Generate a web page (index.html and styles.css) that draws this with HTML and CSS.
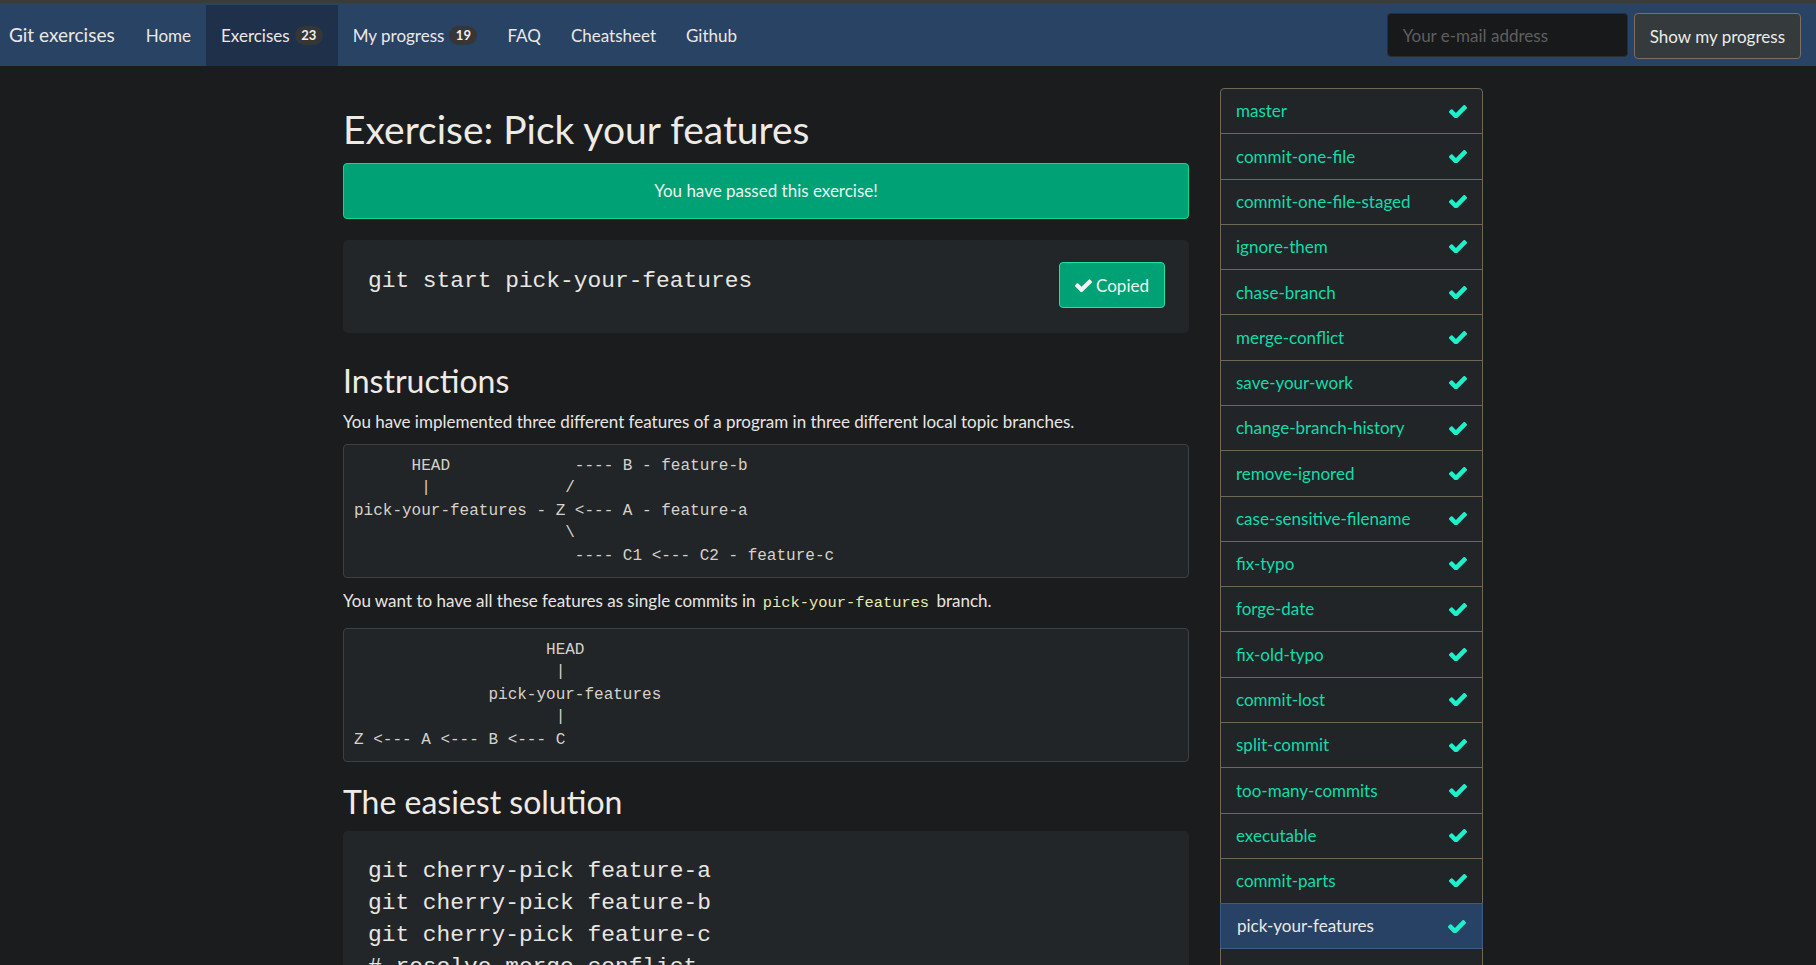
FILE: index.html
```html
<!DOCTYPE html>
<html lang="en">
<head>
<meta charset="utf-8">
<title>Git exercises</title>
<link rel="stylesheet" href="styles.css">
</head>
<body>
<div class="topstrip"></div>
<nav class="navbar">
  <a class="brand" href="#">Git exercises</a>
  <ul class="nav">
    <li><a class="nav-link" href="#">Home</a></li>
    <li class="active"><a class="nav-link" href="#">Exercises <span class="badge">23</span></a></li>
    <li><a class="nav-link" href="#">My progress <span class="badge">19</span></a></li>
    <li><a class="nav-link" href="#">FAQ</a></li>
    <li><a class="nav-link" href="#">Cheatsheet</a></li>
    <li><a class="nav-link" href="#">Github</a></li>
  </ul>
  <form class="nav-form">
    <input class="email" type="text" placeholder="Your e-mail address">
    <button class="btn-progress" type="button">Show my progress</button>
  </form>
</nav>

<div class="page">
  <div class="container">
    <main class="main">
      <h1>Exercise: Pick your features</h1>
      <div class="alert">You have passed this exercise!</div>
      <div class="code-box start-box">
        <code class="cmd">git start pick-your-features</code>
        <button class="btn-copied" type="button"><svg class="ico" viewBox="121 390 1550 1010"><path d="M1671 566q0 40-28 68l-724 724-136 136q-28 28-68 28t-68-28l-136-136-362-362q-28-28-28-68t28-68l136-136q28-28 68-28t68 28l294 295 656-657q28-28 68-28t68 28l136 136q28 28 28 68z"/></svg>Copied</button>
      </div>

      <h2 class="h-instr">Instructions</h2>
      <p class="p-intro">You have implemented three different features of a program in three different local topic branches.</p>
<pre class="diagram d-first">      HEAD             ---- B - feature-b
       |              /
pick-your-features - Z &lt;--- A - feature-a
                      \
                       ---- C1 &lt;--- C2 - feature-c</pre>
      <p class="p-goal">You want to have all these features as single commits in <code class="inline">pick-your-features</code> branch.</p>
<pre class="diagram">                    HEAD
                     |
              pick-your-features
                     |
Z &lt;--- A &lt;--- B &lt;--- C</pre>

      <h2 class="h-sol">The easiest solution</h2>
      <div class="code-box sol-box">
<pre class="cmds">git cherry-pick feature-a
git cherry-pick feature-b
git cherry-pick feature-c
# resolve merge conflict
git add .
git cherry-pick --continue</pre>
      </div>
    </main>

    <aside class="sidebar">
      <ul class="list">
        <li class="item"><a href="#">master</a><svg class="check" viewBox="121 390 1550 1010"><path d="M1671 566q0 40-28 68l-724 724-136 136q-28 28-68 28t-68-28l-136-136-362-362q-28-28-28-68t28-68l136-136q28-28 68-28t68 28l294 295 656-657q28-28 68-28t68 28l136 136q28 28 28 68z"/></svg></li>
        <li class="item"><a href="#">commit-one-file</a><svg class="check" viewBox="121 390 1550 1010"><path d="M1671 566q0 40-28 68l-724 724-136 136q-28 28-68 28t-68-28l-136-136-362-362q-28-28-28-68t28-68l136-136q28-28 68-28t68 28l294 295 656-657q28-28 68-28t68 28l136 136q28 28 28 68z"/></svg></li>
        <li class="item"><a href="#">commit-one-file-staged</a><svg class="check" viewBox="121 390 1550 1010"><path d="M1671 566q0 40-28 68l-724 724-136 136q-28 28-68 28t-68-28l-136-136-362-362q-28-28-28-68t28-68l136-136q28-28 68-28t68 28l294 295 656-657q28-28 68-28t68 28l136 136q28 28 28 68z"/></svg></li>
        <li class="item"><a href="#">ignore-them</a><svg class="check" viewBox="121 390 1550 1010"><path d="M1671 566q0 40-28 68l-724 724-136 136q-28 28-68 28t-68-28l-136-136-362-362q-28-28-28-68t28-68l136-136q28-28 68-28t68 28l294 295 656-657q28-28 68-28t68 28l136 136q28 28 28 68z"/></svg></li>
        <li class="item"><a href="#">chase-branch</a><svg class="check" viewBox="121 390 1550 1010"><path d="M1671 566q0 40-28 68l-724 724-136 136q-28 28-68 28t-68-28l-136-136-362-362q-28-28-28-68t28-68l136-136q28-28 68-28t68 28l294 295 656-657q28-28 68-28t68 28l136 136q28 28 28 68z"/></svg></li>
        <li class="item"><a href="#">merge-conflict</a><svg class="check" viewBox="121 390 1550 1010"><path d="M1671 566q0 40-28 68l-724 724-136 136q-28 28-68 28t-68-28l-136-136-362-362q-28-28-28-68t28-68l136-136q28-28 68-28t68 28l294 295 656-657q28-28 68-28t68 28l136 136q28 28 28 68z"/></svg></li>
        <li class="item"><a href="#">save-your-work</a><svg class="check" viewBox="121 390 1550 1010"><path d="M1671 566q0 40-28 68l-724 724-136 136q-28 28-68 28t-68-28l-136-136-362-362q-28-28-28-68t28-68l136-136q28-28 68-28t68 28l294 295 656-657q28-28 68-28t68 28l136 136q28 28 28 68z"/></svg></li>
        <li class="item"><a href="#">change-branch-history</a><svg class="check" viewBox="121 390 1550 1010"><path d="M1671 566q0 40-28 68l-724 724-136 136q-28 28-68 28t-68-28l-136-136-362-362q-28-28-28-68t28-68l136-136q28-28 68-28t68 28l294 295 656-657q28-28 68-28t68 28l136 136q28 28 28 68z"/></svg></li>
        <li class="item"><a href="#">remove-ignored</a><svg class="check" viewBox="121 390 1550 1010"><path d="M1671 566q0 40-28 68l-724 724-136 136q-28 28-68 28t-68-28l-136-136-362-362q-28-28-28-68t28-68l136-136q28-28 68-28t68 28l294 295 656-657q28-28 68-28t68 28l136 136q28 28 28 68z"/></svg></li>
        <li class="item"><a href="#">case-sensitive-filename</a><svg class="check" viewBox="121 390 1550 1010"><path d="M1671 566q0 40-28 68l-724 724-136 136q-28 28-68 28t-68-28l-136-136-362-362q-28-28-28-68t28-68l136-136q28-28 68-28t68 28l294 295 656-657q28-28 68-28t68 28l136 136q28 28 28 68z"/></svg></li>
        <li class="item"><a href="#">fix-typo</a><svg class="check" viewBox="121 390 1550 1010"><path d="M1671 566q0 40-28 68l-724 724-136 136q-28 28-68 28t-68-28l-136-136-362-362q-28-28-28-68t28-68l136-136q28-28 68-28t68 28l294 295 656-657q28-28 68-28t68 28l136 136q28 28 28 68z"/></svg></li>
        <li class="item"><a href="#">forge-date</a><svg class="check" viewBox="121 390 1550 1010"><path d="M1671 566q0 40-28 68l-724 724-136 136q-28 28-68 28t-68-28l-136-136-362-362q-28-28-28-68t28-68l136-136q28-28 68-28t68 28l294 295 656-657q28-28 68-28t68 28l136 136q28 28 28 68z"/></svg></li>
        <li class="item"><a href="#">fix-old-typo</a><svg class="check" viewBox="121 390 1550 1010"><path d="M1671 566q0 40-28 68l-724 724-136 136q-28 28-68 28t-68-28l-136-136-362-362q-28-28-28-68t28-68l136-136q28-28 68-28t68 28l294 295 656-657q28-28 68-28t68 28l136 136q28 28 28 68z"/></svg></li>
        <li class="item"><a href="#">commit-lost</a><svg class="check" viewBox="121 390 1550 1010"><path d="M1671 566q0 40-28 68l-724 724-136 136q-28 28-68 28t-68-28l-136-136-362-362q-28-28-28-68t28-68l136-136q28-28 68-28t68 28l294 295 656-657q28-28 68-28t68 28l136 136q28 28 28 68z"/></svg></li>
        <li class="item"><a href="#">split-commit</a><svg class="check" viewBox="121 390 1550 1010"><path d="M1671 566q0 40-28 68l-724 724-136 136q-28 28-68 28t-68-28l-136-136-362-362q-28-28-28-68t28-68l136-136q28-28 68-28t68 28l294 295 656-657q28-28 68-28t68 28l136 136q28 28 28 68z"/></svg></li>
        <li class="item"><a href="#">too-many-commits</a><svg class="check" viewBox="121 390 1550 1010"><path d="M1671 566q0 40-28 68l-724 724-136 136q-28 28-68 28t-68-28l-136-136-362-362q-28-28-28-68t28-68l136-136q28-28 68-28t68 28l294 295 656-657q28-28 68-28t68 28l136 136q28 28 28 68z"/></svg></li>
        <li class="item"><a href="#">executable</a><svg class="check" viewBox="121 390 1550 1010"><path d="M1671 566q0 40-28 68l-724 724-136 136q-28 28-68 28t-68-28l-136-136-362-362q-28-28-28-68t28-68l136-136q28-28 68-28t68 28l294 295 656-657q28-28 68-28t68 28l136 136q28 28 28 68z"/></svg></li>
        <li class="item"><a href="#">commit-parts</a><svg class="check" viewBox="121 390 1550 1010"><path d="M1671 566q0 40-28 68l-724 724-136 136q-28 28-68 28t-68-28l-136-136-362-362q-28-28-28-68t28-68l136-136q28-28 68-28t68 28l294 295 656-657q28-28 68-28t68 28l136 136q28 28 28 68z"/></svg></li>
        <li class="item active"><a href="#">pick-your-features</a><svg class="check" viewBox="121 390 1550 1010"><path d="M1671 566q0 40-28 68l-724 724-136 136q-28 28-68 28t-68-28l-136-136-362-362q-28-28-28-68t28-68l136-136q28-28 68-28t68 28l294 295 656-657q28-28 68-28t68 28l136 136q28 28 28 68z"/></svg></li>
        <li class="item"><a href="#">rebase-complex</a></li>
        <li class="item"><a href="#">invalidated-branch</a></li>
      </ul>
    </aside>
  </div>
</div>
</body>
</html>
```

FILE: styles.css
```css
* { box-sizing: border-box; }

html, body {
  margin: 0;
  padding: 0;
  background: #1b1c1e;
  color: #e8e6e3;
  font-family: Lato, "Open Sans", "Liberation Sans", sans-serif;
  font-size: 17px;
  line-height: 25.5px;
  overflow: hidden;
}

a { text-decoration: none; color: inherit; }

.topstrip {
  height: 3px;
  background: #3a3b3c;
}

/* ---------- navbar ---------- */
.navbar {
  height: 63px;
  background: #294365;
  display: flex;
  align-items: stretch;
  padding: 0 15px 0 9px;
}

.brand {
  display: flex;
  align-items: center;
  padding-top: 1px;
  font-size: 19px;
  color: #ebe8e4;
  margin-right: 16px;
}

.nav {
  list-style: none;
  margin: 0;
  padding: 0;
  display: flex;
  align-items: stretch;
}

.nav li {
  display: flex;
  margin-top: 2px;
}

.nav li.active { background: #1f304b; }

.nav-link {
  display: flex;
  align-items: center;
  padding: 0 15px;
  font-size: 17px;
  line-height: 24px;
  color: #ebe8e4;
}

.badge {
  display: inline-block;
  margin-left: 5px;
  background: #363636;
  color: #f0eeea;
  font-size: 13px;
  font-weight: 700;
  line-height: 18.5px;
  padding: 0 6.5px;
  border-radius: 10px;
}

.nav-form {
  margin-left: auto;
  display: flex;
  align-items: center;
  gap: 6px;
  padding-top: 1px;
}

.email {
  width: 241px;
  height: 44px;
  background: #18191b;
  border: 1px solid #2c2d2f;
  border-radius: 4px;
  padding: 0 15px;
  font-family: inherit;
  font-size: 17px;
  color: #e8e6e3;
  outline: none;
}

.email::placeholder { color: #5f5f5f; }

.btn-progress {
  height: 46px;
  padding: 0 15px;
  background: #353a3d;
  border: 1px solid #7a6f60;
  border-radius: 4px;
  color: #ecebe8;
  font-family: inherit;
  font-size: 17px;
  margin-top: 2px;
}

/* ---------- page layout ---------- */
.page {
  display: flex;
  justify-content: center;
  padding-left: 10px;
}

.container {
  width: 1140px;
  display: flex;
  gap: 31px;
  padding-top: 22px;
}

.main {
  width: 846px;
  flex: none;
}

.sidebar {
  width: 263px;
  flex: none;
}

h1 {
  margin: 18px 0 10px;
  font-size: 39px;
  line-height: 47px;
  font-weight: 400;
  color: #eeebe6;
}

h2 {
  font-size: 32px;
  line-height: 38px;
  font-weight: 400;
  color: #eeebe6;
}

.h-instr { margin: 29px 0 8.5px; }
.h-sol { margin: 21px 0 10px; }

p { margin: 0; }
.p-intro { margin-bottom: 9.7px; }
.p-goal { margin-bottom: 13.8px; }

.alert {
  height: 56px;
  background: #00a174;
  border: 1px solid #13d690;
  border-radius: 4px;
  display: flex;
  align-items: center;
  justify-content: center;
  color: #e8f4ee;
  margin-bottom: 21px;
}

.code-box {
  background: #232629;
  border-radius: 5px;
}

.start-box {
  height: 93px;
  display: flex;
  justify-content: space-between;
  align-items: flex-start;
  padding: 22px 24px 0 25px;
}

.cmd {
  font-family: "Liberation Mono", "Courier New", monospace;
  font-size: 22.86px;
  line-height: 32px;
  padding-top: 3px;
  color: #e8e6e3;
}

.btn-copied {
  height: 46px;
  width: 106px;
  background: #00a174;
  border: 1px solid #1de39c;
  border-radius: 4px;
  color: #eef6f2;
  font-family: inherit;
  font-size: 17px;
  display: flex;
  align-items: center;
  justify-content: center;
  gap: 4px;
  padding: 0;
}

.ico {
  width: 17px;
  height: 13px;
  fill: #f2f2f2;
}

pre {
  margin: 0;
  padding: 10px;
  background: #222528;
  border: 1px solid #3b4045;
  border-radius: 4px;
  font-family: "Liberation Mono", "Courier New", monospace;
  font-size: 16px;
  line-height: 22.5px;
  color: #d6d2cb;
}

.d-first { margin-bottom: 10.1px; }

.inline {
  font-family: "Liberation Mono", "Courier New", monospace;
  font-size: 15.4px;
  line-height: 20px;
  color: #e8ebb0;
  padding: 0 3px;
}

.sol-box {
  padding: 24px 25px 30px;
}

.cmds {
  margin: 0;
  padding: 0;
  border: 0;
  background: transparent;
  font-size: 22.86px;
  line-height: 32px;
  color: #e8e6e3;
}

/* ---------- sidebar ---------- */
.list {
  list-style: none;
  margin: 0;
  padding: 0;
  border: 1px solid #706756;
  border-radius: 4px;
  background: #222528;
}

.item {
  display: flex;
  align-items: center;
  justify-content: space-between;
  padding: 9.4px 15px;
  border-top: 1px solid #706756;
  color: #10dcaa;
  line-height: 25.5px;
  font-size: 17px;
}

.item:first-child { border-top: 0; }

.item.active {
  background: #284266;
  color: #ebe8e4;
  border-top-color: #3e5b86;
  margin: 0 -1px;
  padding: 9.4px 16px;
  border-left: 1px solid #3e5b86;
  border-right: 1px solid #3e5b86;
}

.item.active + .item { border-top-color: #3e5b86; }

.check {
  width: 18px;
  height: 13px;
  fill: #1ef0cc;
}
```
